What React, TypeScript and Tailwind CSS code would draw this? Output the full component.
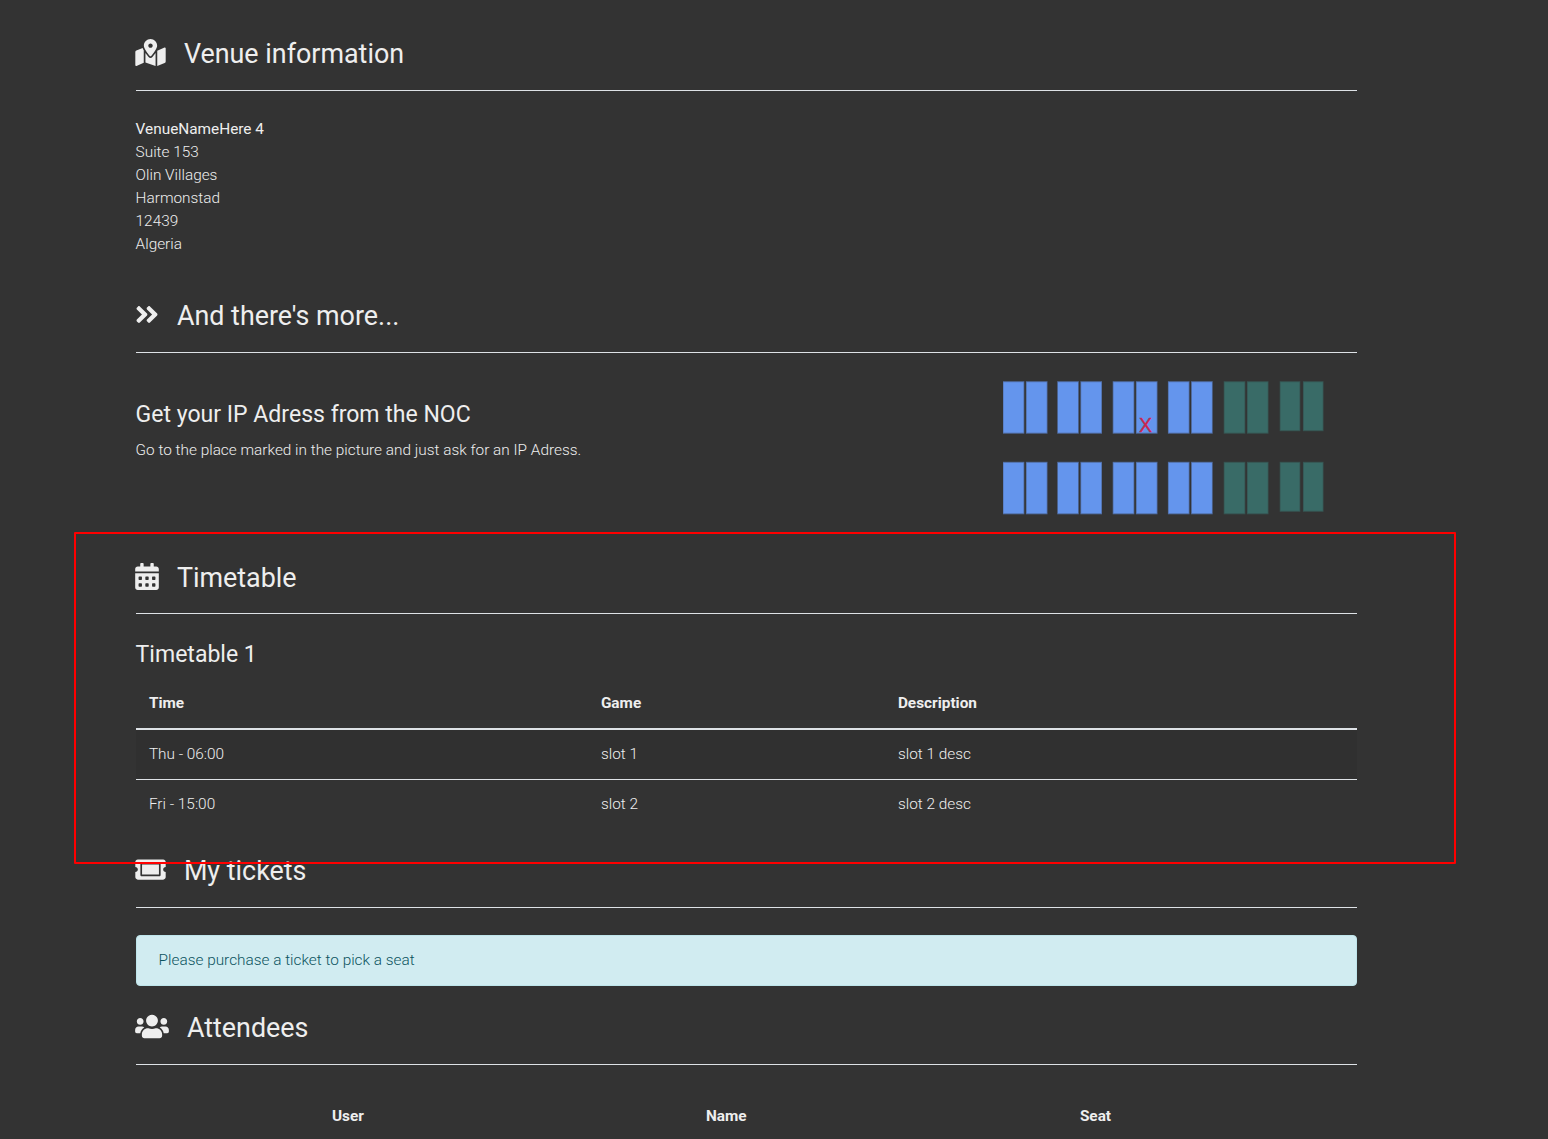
import type { ReactNode } from "react";
import { FaAngleDoubleRight, FaCalendarAlt, FaMapMarkedAlt, FaTicketAlt, FaUsers } from "react-icons/fa";

function SectionTitle({ icon, children, className = "" }: { icon: ReactNode; children: ReactNode; className?: string }) {
  return (
    <h3 className={`flex items-start border-b border-[#dee2e6] text-[26.88px] leading-8 font-normal text-[#eee] ${className}`}>
      <span className="-ml-[0.6px] pt-[1.4px]">{icon}</span>
      <span className="ml-[17.9px]">{children}</span>
    </h3>
  );
}

const address = ["Suite 153", "Olin Villages", "Harmonstad", "12439", "Algeria"];
const seatX = [0, 54.5, 110, 165.2, 221, 277];

function Seat({ x, y, w, h, fill }: { x: number; y: number; w: number; h: number; fill: string }) {
  return (
    <g>
      <rect x={x - 0.3} y={y} width={w + 0.6} height={h} fill={fill} opacity="0.6" />
      <rect x={x + 0.5} y={y + 1} width={w - 1} height={h - 2} fill={fill} />
    </g>
  );
}

function SeatPlan() {
  return (
    <svg width="322" height="135" viewBox="0 0 322 135" className="block">
      {[1.2, 81.8].map((y) =>
        seatX.map((x, i) => {
          const last = i === 5;
          const w = last ? 20 : 21;
          const h = last ? 50 : 52.5;
          const fill = i < 4 ? "#6495ed" : "#396b67";
          return (
            <g key={`${x}-${y}`}>
              <Seat x={x} y={y} w={w} h={h} fill={fill} />
              <Seat x={x + 23.2} y={y} w={w} h={h} fill={fill} />
            </g>
          );
        }),
      )}
      <text x="142.5" y="52" textAnchor="middle" fontSize="19.5" fontFamily="Liberation Sans, sans-serif" fill="#c9264f" stroke="#c9264f" strokeWidth="0.4">X</text>
    </svg>
  );
}

export default function App() {
  return (
    <div className="relative h-[1139px] w-[1548px] overflow-hidden bg-[#333] pt-[38px] pl-[135.6px] font-['Roboto',sans-serif] text-[15.36px] leading-[23px] font-light text-[#eee]">
      <main className="w-[1221px]">
        <SectionTitle icon={<FaMapMarkedAlt className="h-[27px] w-[31px]" />} className="h-[53px]">
          Venue information
        </SectionTitle>
        <address className="mt-[27px] not-italic">
          <strong className="block font-normal">VenueNameHere 4</strong>
          {address.map((line) => (
            <div key={line}>{line}</div>
          ))}
        </address>

        <SectionTitle icon={<FaAngleDoubleRight className="h-[27px] w-[24px]" />} className="mt-[44px] h-[53px]">
          And there's more...
        </SectionTitle>
        <div className="mt-[27px] flex h-[135px]">
          <div className="w-[867px] pt-[21px]">
            <h4 className="text-[23.04px] leading-7 font-normal">Get your IP Adress from the NOC</h4>
            <p className="mt-[10px]">Go to the place marked in the picture and just ask for an IP Adress.</p>
          </div>
          <SeatPlan />
        </div>

        <SectionTitle icon={<FaCalendarAlt className="h-[27px] w-[24px]" />} className="mt-[47px] h-[52px]">
          Timetable
        </SectionTitle>
        <h4 className="mt-[27px] text-[23.04px] leading-7 font-normal">Timetable 1</h4>
        <table className="mt-[9px] w-full table-fixed border-collapse text-left">
          <colgroup>
            <col className="w-[452px]" />
            <col className="w-[297px]" />
            <col />
          </colgroup>
          <thead>
            <tr className="h-[51px] border-b-2 border-[#dee2e6] font-bold">
              <th className="px-[13.3px]">Time</th>
              <th className="px-[13.3px]">Game</th>
              <th className="px-[13.3px]">Description</th>
            </tr>
          </thead>
          <tbody>
            <tr className="h-[50px] border-b border-[#dee2e6] bg-[#303030]">
              <td className="px-[13.3px]">Thu - 06:00</td>
              <td className="px-[13.3px]">slot 1</td>
              <td className="px-[13.3px]">slot 1 desc</td>
            </tr>
            <tr className="h-[50px]">
              <td className="px-[13.3px]">Fri - 15:00</td>
              <td className="px-[13.3px]">slot 2</td>
              <td className="px-[13.3px]">slot 2 desc</td>
            </tr>
          </tbody>
        </table>

        <SectionTitle icon={<FaTicketAlt className="h-[27px] w-[31px]" />} className="mt-[26px] h-[53px]">
          My tickets
        </SectionTitle>
        <div className="mt-[27px] h-[51px] rounded-[4px] border border-[#bee5eb] bg-[#d1ecf1] px-[22px] pt-[13px] text-[#0c5460]">
          Please purchase a ticket to pick a seat
        </div>

        <SectionTitle icon={<FaUsers className="h-[27px] w-[34px]" />} className="mt-[26px] h-[53px]">
          Attendees
        </SectionTitle>
        <div className="mt-[40px] flex pl-[196.3px] font-bold">
          <span className="w-[374px]">User</span>
          <span className="w-[374px]">Name</span>
          <span>Seat</span>
        </div>
      </main>
      <div className="pointer-events-none absolute top-[532px] left-[74px] h-[332px] w-[1382px] rounded-[1px] border-2 border-[#f00]" />
    </div>
  );
}
